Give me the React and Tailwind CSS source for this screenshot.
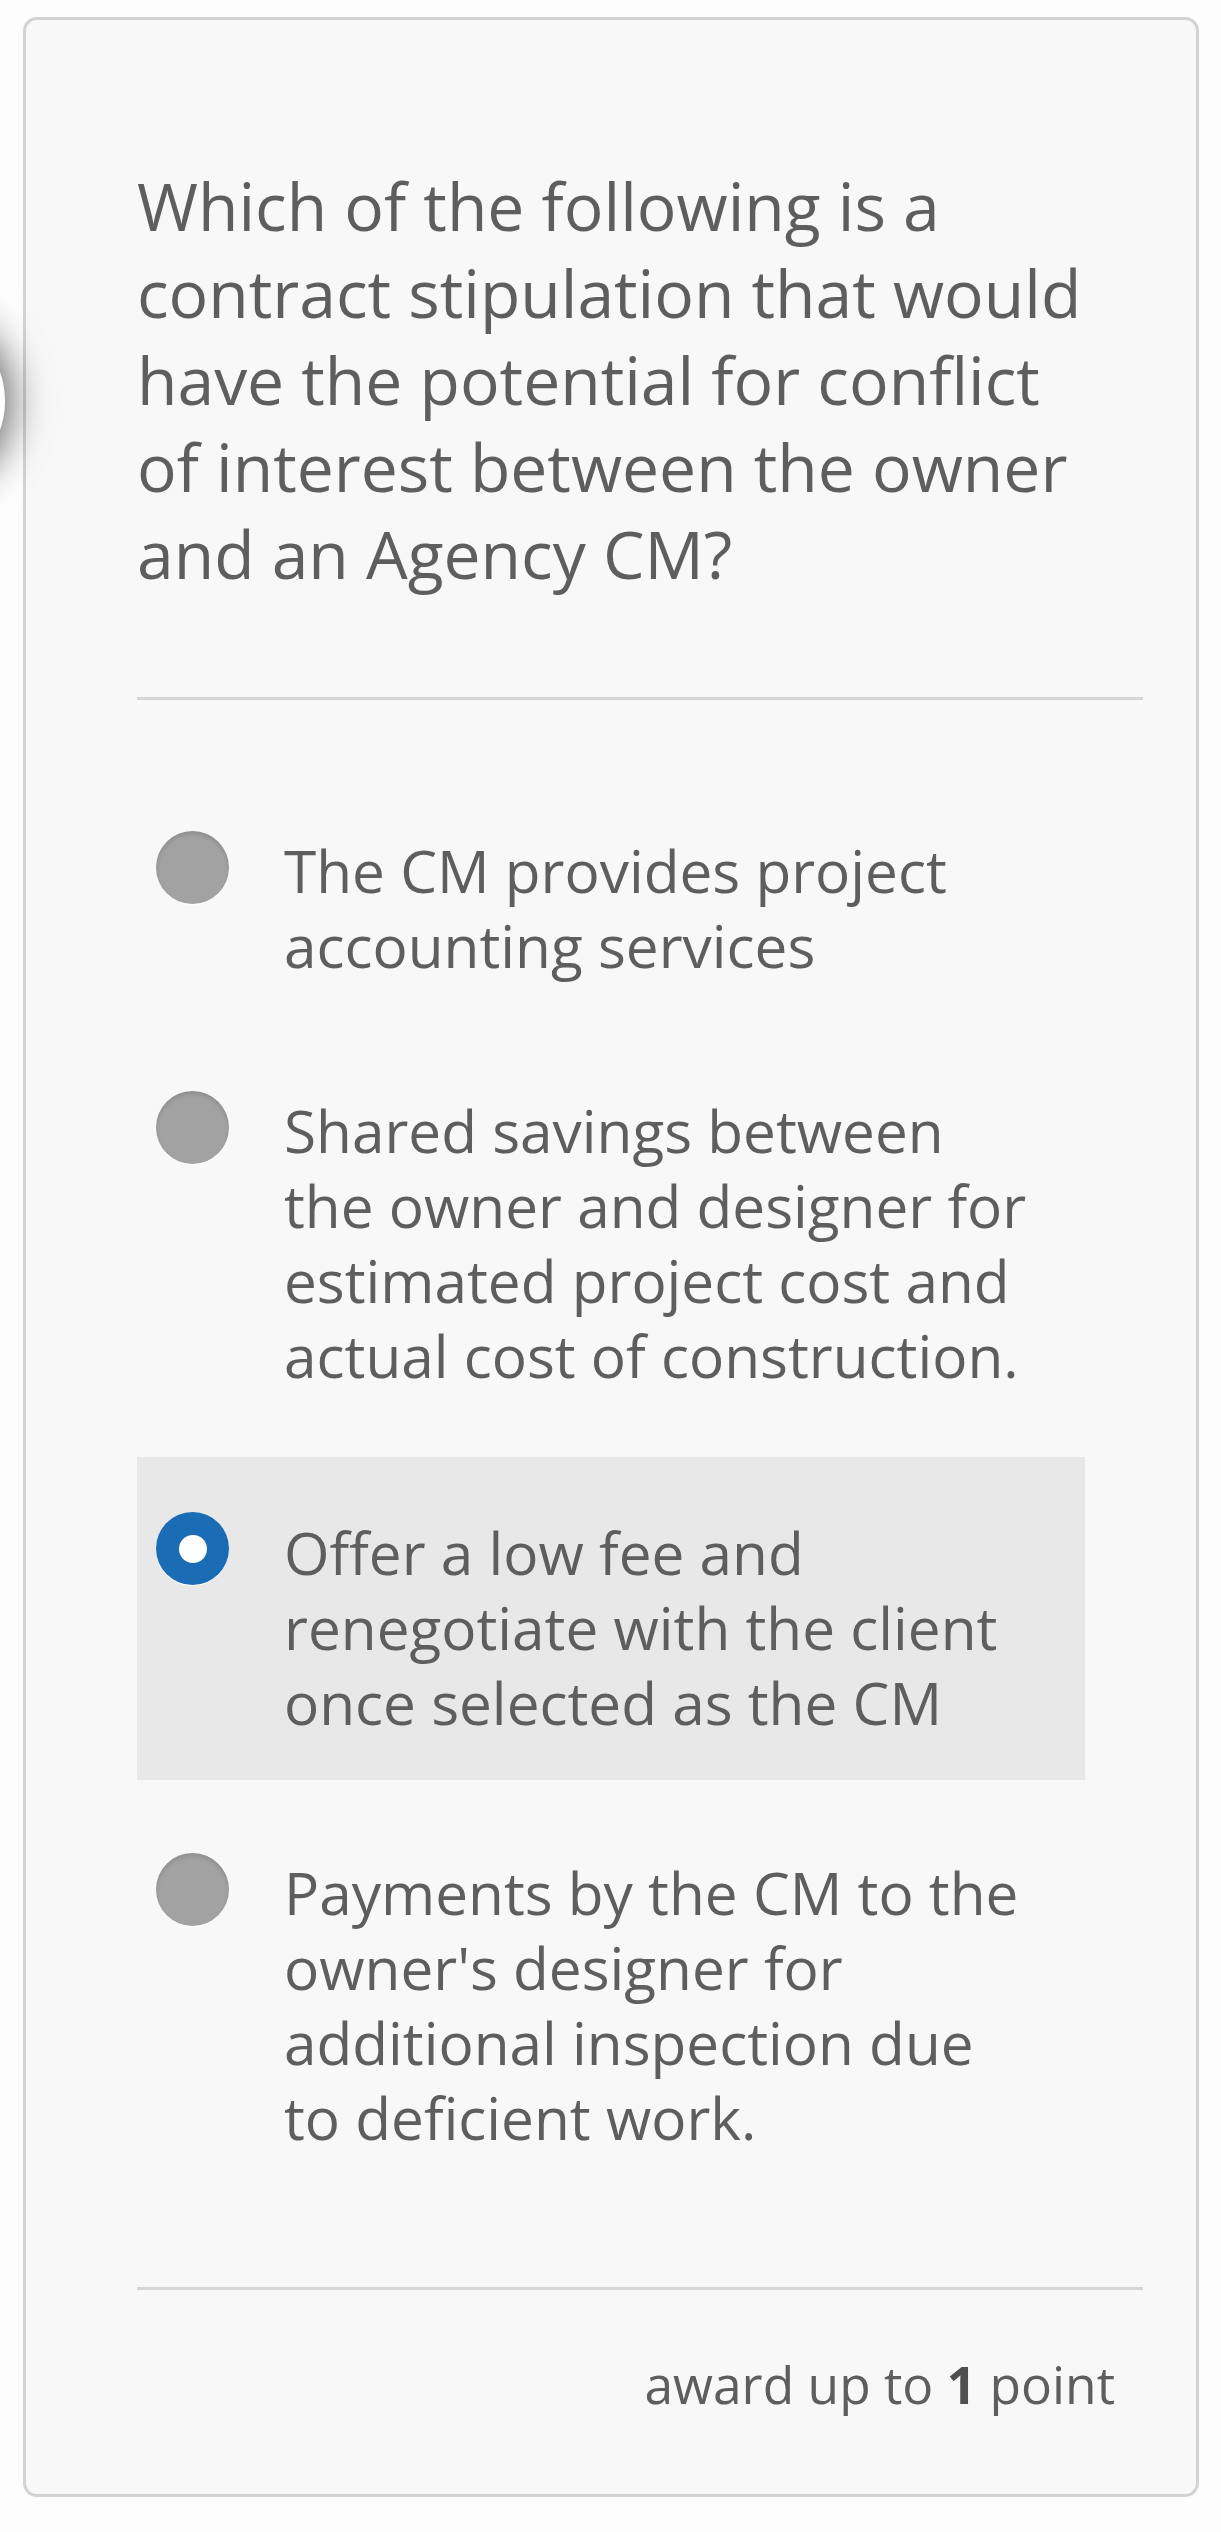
import { Fragment } from 'react'

const question = [
  'Which of the following is a',
  'contract stipulation that would',
  'have the potential for conflict',
  'of interest between the owner',
  'and an Agency CM?',
]

const options = [
  { lines: ['The CM provides project', 'accounting services'], mt: 'mt-[75px]' },
  {
    lines: [
      'Shared savings between',
      'the owner and designer for',
      'estimated project cost and',
      'actual cost of construction.',
    ],
    mt: 'mt-[12px]',
  },
  {
    lines: ['Offer a low fee and', 'renegotiate with the client', 'once selected as the CM'],
    mt: 'mt-[24px]',
    selected: true,
  },
  {
    lines: [
      'Payments by the CM to the',
      "owner's designer for",
      'additional inspection due',
      'to deficient work.',
    ],
    mt: 'mt-[17px]',
  },
]

function Lines({ lines }) {
  return lines.map((l, i) => (
    <Fragment key={i}>
      {l}
      {i < lines.length - 1 && <br />}
    </Fragment>
  ))
}

function Radio({ selected }) {
  if (selected) {
    return (
      <div className="mt-[-3px] flex h-[73px] w-[73px] shrink-0 items-center justify-center rounded-full bg-[#1a6cb4] shadow-[0_1px_0_#ffffff]">
        <div className="h-[28px] w-[28px] rounded-full bg-white" />
      </div>
    )
  }
  return (
    <div className="mt-[-2px] h-[73px] w-[73px] shrink-0 rounded-full bg-[#a2a2a2] shadow-[inset_0_3px_4px_rgba(0,0,0,0.12),0_1px_0_#ffffff]" />
  )
}

export default function App() {
  return (
    <div
      className="relative h-[2532px] w-[1221px] overflow-hidden bg-[#fdfdfd] pl-[23px] pt-[17px] text-[#5e5e5e]"
      style={{ fontFamily: '"Open Sans", "Noto Sans", sans-serif' }}
    >
      <div className="h-[2480px] w-[1176px] rounded-[14px] border-[3px] border-[#d3d3d3] bg-[#f8f8f8] pl-[111px] pr-[53px] pt-[142px]">
        <h1 className="text-[66px] font-normal leading-[87px]">
          <Lines lines={question} />
        </h1>

        <div className="mt-[100px] h-[3px] bg-[#d6d6d6]" />

        <div className="mr-[58px] flex flex-col">
          {options.map((o, i) => (
            <div
              key={i}
              className={`${o.mt} flex items-start gap-[55px] pb-[40px] pl-[19px] pt-[58px] ${
                o.selected ? 'bg-[#e8e8e8]' : ''
              }`}
            >
              <Radio selected={o.selected} />
              <p className="text-[58.5px] leading-[75px]">
                <Lines lines={o.lines} />
              </p>
            </div>
          ))}
        </div>

        <div className="mt-[92px] h-[3px] bg-[#d6d6d6]" />

        <p className="mt-[59px] pr-[28px] text-right text-[51.5px] leading-[70px]">
          award up to <span className="font-bold text-[#505050]">1</span> point
        </p>
      </div>

      <div className="absolute left-[-169px] top-[314px] h-[174px] w-[174px] rounded-full bg-white shadow-[0_0_40px_6px_rgba(0,0,0,0.6)]" />
    </div>
  )
}
